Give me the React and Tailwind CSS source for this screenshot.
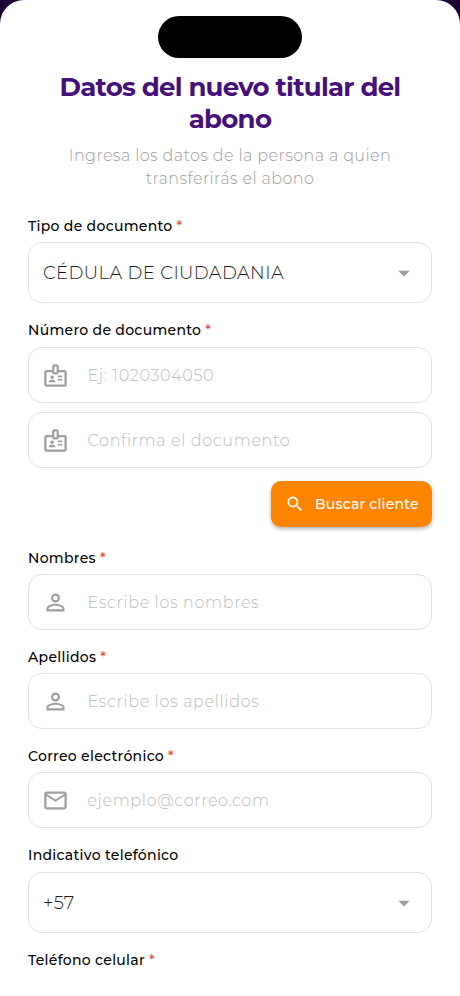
import React, { useState } from "react";
import {
  MdArrowDropDown,
  MdMailOutline,
  MdOutlineBadge,
  MdPersonOutline,
  MdSearch,
} from "react-icons/md";

const Label = ({ text, required = true }) => (
  <div className="flex h-5 items-center whitespace-nowrap text-[14px] font-medium leading-5 tracking-[0.3px] text-black">
    {text}
    {required && <span className="ml-1 text-[#f44336]">*</span>}
  </div>
);

const SelectBox = ({ value }) => (
  <button
    type="button"
    className="flex h-[61px] w-full items-center justify-between rounded-[14px] border border-[#e0e0e0] pl-3.5 pr-[13px]"
  >
    <span className="whitespace-nowrap pt-0.5 text-[18px] font-light tracking-[0.4px] text-[#1c1c1c]">{value}</span>
    <MdArrowDropDown className="size-7 text-[#9e9e9e]" />
  </button>
);

const InputBox = ({ icon: Icon, placeholder }) => {
  const [value, setValue] = useState("");

  return (
    <div className="flex h-[56px] items-center rounded-[14px] border border-[#e0e0e0] pl-[12.5px]">
      <Icon className="size-[27px] shrink-0 text-[#9e9e9e]" />
      <input
        type="text"
        value={value}
        onChange={(e) => setValue(e.target.value)}
        placeholder={placeholder}
        className="ml-[19px] min-w-0 flex-1 pt-0.5 text-[16px] font-light tracking-[0.65px] text-black outline-none placeholder:text-[#bdbdbd]"
      />
    </div>
  );
};

const App = () => {
  return (
    <div className="h-[996px] overflow-hidden bg-[#1c0536] font-['Montserrat','Inter',sans-serif]">
      <div className="flex h-full flex-col rounded-t-[24px] bg-white px-7 pt-4">
        <div className="h-[42px] w-36 shrink-0 self-center rounded-full bg-black" />

        <h1 className="mt-[13px] text-center text-[26px] font-bold leading-8 tracking-[-0.73px] text-[#46107a]">
          <span className="block whitespace-nowrap">Datos del nuevo titular del</span>
          <span className="block">abono</span>
        </h1>
        <p className="mt-[9px] text-center text-[16px] font-light leading-[23px] tracking-[0.4px] text-[#9e9e9e]">
          <span className="block whitespace-nowrap">Ingresa los datos de la persona a quien</span>
          <span className="block">transferirás el abono</span>
        </p>

        <div className="mt-[26px] flex flex-col gap-1.5">
          <Label text="Tipo de documento" />
          <SelectBox value="CÉDULA DE CIUDADANIA" />
        </div>

        <div className="mt-[17px] flex flex-col">
          <Label text="Número de documento" />
          <div className="mt-[7px] flex flex-col gap-[9px]">
            <InputBox icon={MdOutlineBadge} placeholder="Ej: 1020304050" />
            <InputBox icon={MdOutlineBadge} placeholder="Confirma el documento" />
          </div>
        </div>

        <button
          type="button"
          className="mt-[13px] flex h-[46px] w-[161px] shrink-0 items-center self-end rounded-[10px] bg-[#ff8400] pl-3.5 text-white shadow-[0_2px_4px_rgba(0,0,0,0.3)]"
        >
          <MdSearch className="size-5" />
          <span className="ml-2.5 whitespace-nowrap text-[14px] font-medium tracking-[0.2px]">Buscar cliente</span>
        </button>

        <div className="mt-[21px] flex flex-col gap-1.5">
          <Label text="Nombres" />
          <InputBox icon={MdPersonOutline} placeholder="Escribe los nombres" />
        </div>

        <div className="mt-[17px] flex flex-col gap-1.5">
          <Label text="Apellidos" />
          <InputBox icon={MdPersonOutline} placeholder="Escribe los apellidos" />
        </div>

        <div className="mt-[17px] flex flex-col gap-1.5">
          <Label text="Correo electrónico" />
          <InputBox icon={MdMailOutline} placeholder="ejemplo@correo.com" />
        </div>

        <div className="mt-[17px] flex flex-col gap-[7px]">
          <Label text="Indicativo telefónico" required={false} />
          <SelectBox value="+57" />
        </div>

        <div className="mt-[17px]">
          <Label text="Teléfono celular" />
        </div>
      </div>
    </div>
  );
};

export default App;
